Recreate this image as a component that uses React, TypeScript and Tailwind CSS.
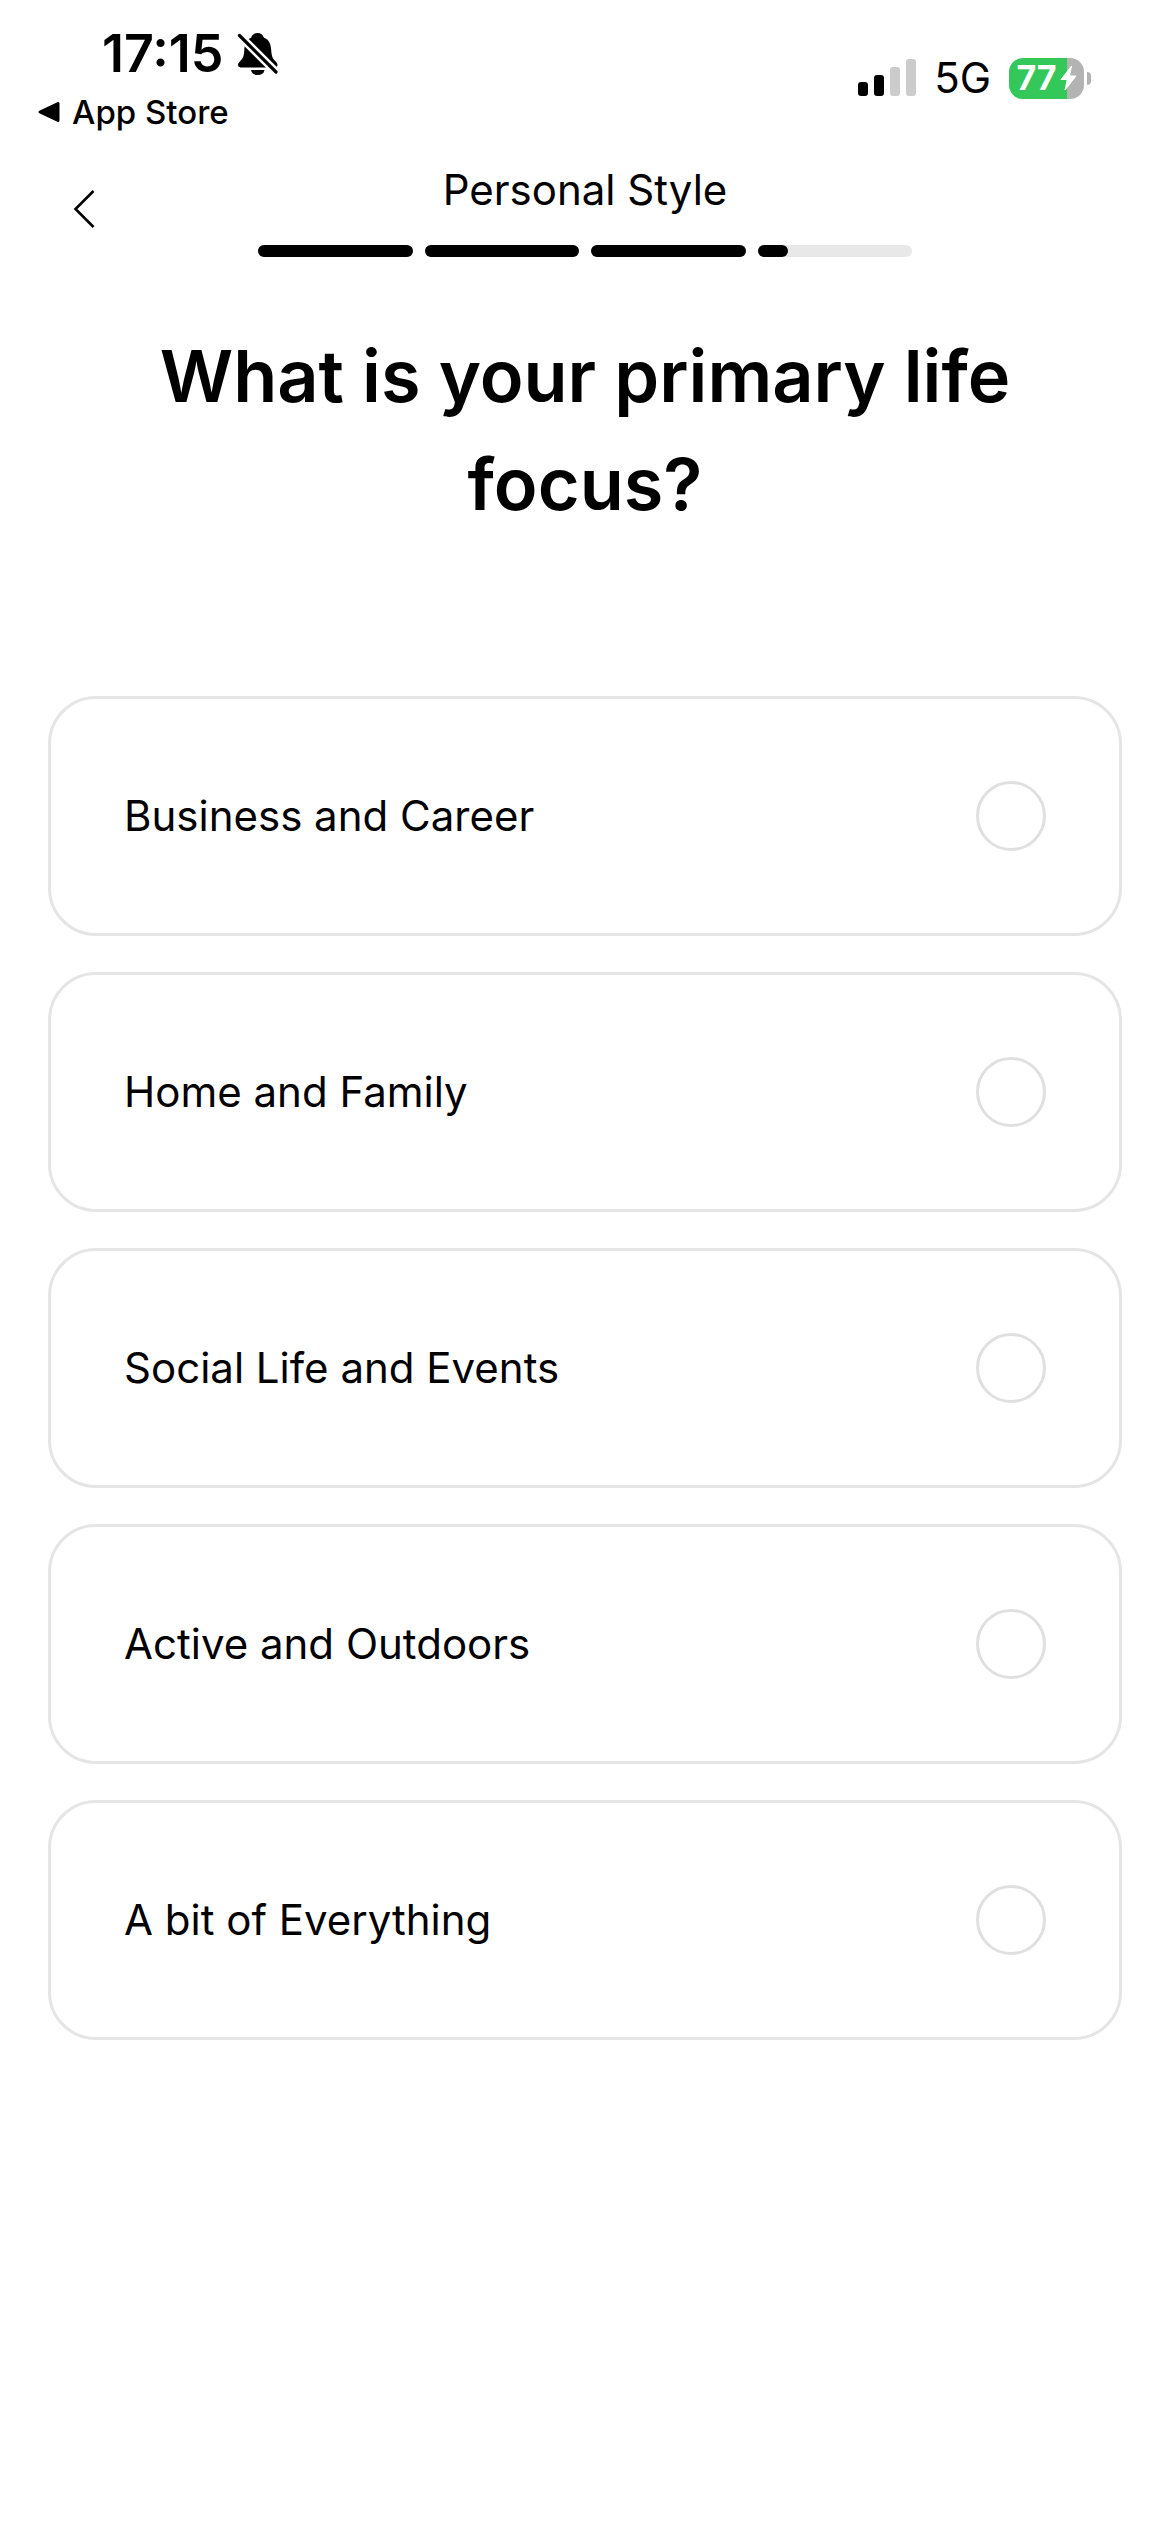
import { useState } from "react";

const steps = [
	{ id: 1, progress: 100 },
	{ id: 2, progress: 100 },
	{ id: 3, progress: 100 },
	{ id: 4, progress: 20 },
];

const options = [
	{ id: "business", label: "Business and Career" },
	{ id: "home", label: "Home and Family" },
	{ id: "social", label: "Social Life and Events" },
	{ id: "active", label: "Active and Outdoors" },
	{ id: "everything", label: "A bit of Everything" },
];

function BellOffIcon() {
	return (
		<svg width="42" height="44" viewBox="0 0 42 44" aria-hidden="true">
			<path
				d="M20.5 1c-3.200 0-5.600 1.900-6.200 4.400C9.300 7.600 7.600 12 7.300 18c-.3 6-1.500 8.700-4.200 11.300C1.700 30.700 1 31.800 1 33c0 1.500 1.200 2.500 3 2.500h33.500c1.800 0 3-1 3-2.500 0-1.200-.7-2.300-2.100-3.700-2.700-2.600-3.900-5.300-4.200-11.300-.3-6-2-10.400-7.400-12.600C26.100 2.900 23.700 1 20.500 1z"
				fill="black"
			/>
			<path d="M14 38h13.500c-.6 3.200-3.200 5-6.700 5s-6.200-1.800-6.800-5z" fill="black" />
			<path d="M-1 0l42 42" stroke="white" strokeWidth="8" />
			<path d="M2.500 3.500l36.500 36.500" stroke="black" strokeWidth="3.200" strokeLinecap="round" />
		</svg>
	);
}

function SignalIcon() {
	return (
		<svg width="58" height="38" viewBox="0 0 58 38" role="img" aria-label="Signal">
			<rect x="0" y="23" width="10" height="14" rx="3" fill="black" />
			<rect x="16" y="16" width="10" height="21" rx="3" fill="black" />
			<rect x="32" y="8" width="10" height="29" rx="3" fill="#cccccc" />
			<rect x="48" y="0" width="10" height="37" rx="3" fill="#cccccc" />
		</svg>
	);
}

function Battery() {
	return (
		<div className="flex items-center gap-[3px]">
			<div className="flex h-[41px] w-[75px] items-center justify-center gap-[3px] rounded-[14px] bg-linear-to-r from-[#34c759] from-77% to-[#b3b3b3] to-77%">
				<span className="text-[34px] leading-[40px] font-bold text-white">77</span>
				<svg width="17" height="26" viewBox="0 0 17 26" aria-hidden="true">
					<path
						d="M11.500 1L1 14.500h6.300L5 25l11-14h-6.500z"
						fill="white"
						stroke="white"
						strokeLinejoin="round"
					/>
				</svg>
			</div>
			<div className="h-[13px] w-1 rounded-r-full bg-[#b3b3b3]" />
		</div>
	);
}

function StatusBar() {
	return (
		<div className="flex items-start justify-between pt-6 pr-[79px] pl-[38px]">
			<div className="flex flex-col gap-2">
				<div className="flex items-center gap-[14px] pl-16">
					<span className="text-[52px] leading-[60px] font-semibold">17:15</span>
					<BellOffIcon />
				</div>
				<a href="#" className="flex items-center gap-3 text-[33px] leading-[40px] font-medium">
					<svg width="22" height="22" viewBox="0 0 22 22" aria-hidden="true">
						<path
							d="M2 11L20 2.500v17z"
							fill="black"
							stroke="black"
							strokeWidth="3"
							strokeLinejoin="round"
						/>
					</svg>
					App Store
				</a>
			</div>
			<div className="flex h-[108px] items-center gap-[18px]">
				<SignalIcon />
				<span className="text-[42px] leading-[60px]">5G</span>
				<Battery />
			</div>
		</div>
	);
}

function Header() {
	return (
		<header className="grid grid-cols-[1fr_654px_1fr] items-center px-[60px] pt-7">
			<button type="button" aria-label="Back" className="h-12 w-12 cursor-pointer">
				<svg width="48" height="48" viewBox="0 0 48 48" fill="none" aria-hidden="true">
					<path d="M33.500 6L15.500 24l18 18" stroke="black" strokeWidth="2.600" />
				</svg>
			</button>
			<div>
				<p className="text-center text-[42px] leading-[60px]">Personal Style</p>
				<div className="mt-[25px] flex gap-3">
					{steps.map((step) => (
						<div key={step.id} className="h-3 flex-1 rounded-full bg-[#e8e8e8]">
							<div
								className="h-3 rounded-full bg-black"
								style={{ width: `${step.progress}%` }}
							/>
						</div>
					))}
				</div>
			</div>
		</header>
	);
}

export default function App() {
	const [focus, setFocus] = useState("");

	return (
		<div className="min-h-screen bg-white font-['Inter',sans-serif] text-black">
			<StatusBar />
			<Header />
			<main className="px-12 pt-[65px]">
				<h1 className="px-20 text-center text-[72px] leading-[108px] font-semibold">
					What is your primary life focus?
				</h1>
				<div
					role="radiogroup"
					aria-label="Primary life focus"
					className="mt-[158px] flex flex-col gap-9"
				>
					{options.map((option) => (
						<label
							key={option.id}
							htmlFor={option.id}
							className="flex cursor-pointer items-center justify-between rounded-[48px] border-3 border-[#e5e5e5] px-[73px] py-[82px]"
						>
							<span className="text-[42px] leading-[60px]">{option.label}</span>
							<input
								id={option.id}
								type="radio"
								name="focus"
								value={option.id}
								checked={focus === option.id}
								onChange={() => setFocus(option.id)}
								className="size-[70px] cursor-pointer appearance-none rounded-full border-3 border-[#e0e0e0] checked:border-[20px] checked:border-black"
							/>
						</label>
					))}
				</div>
			</main>
		</div>
	);
}
